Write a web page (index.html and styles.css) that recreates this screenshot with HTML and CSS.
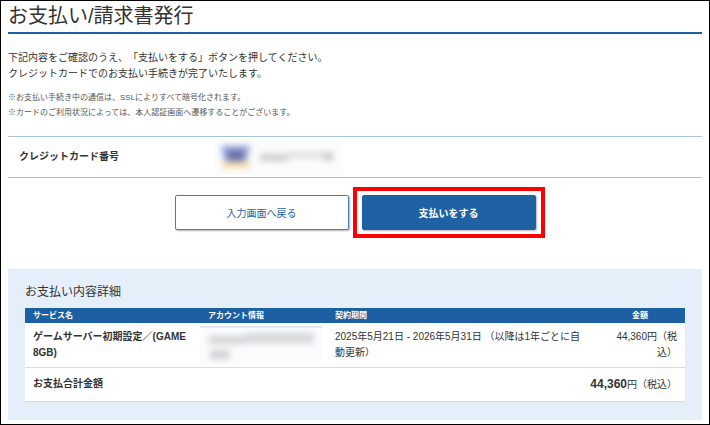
FILE: index.html
```html
<!DOCTYPE html>
<html lang="ja">
<head>
    <meta charset="UTF-8">
    <meta name="viewport" content="width=device-width, initial-scale=1.0">
    <title>お支払い/請求書発行</title>
    <link rel="stylesheet" href="styles.css">
</head>
<body>
    <main class="page">
        <h1>お支払い/請求書発行</h1>

        <p class="lead">下記内容をご確認のうえ、「支払いをする」ボタンを押してください。<br>クレジットカードでのお支払い手続きが完了いたします。</p>
        <ul class="notes">
            <li>※お支払い手続き中の通信は、SSLによりすべて暗号化されます。</li>
            <li>※カードのご利用状況によっては、本人認証画面へ遷移することがございます。</li>
        </ul>

        <dl class="card-info">
            <dt>クレジットカード番号</dt>
            <dd class="masked card-number">
                <svg width="130" height="36" viewBox="0 0 130 36" aria-hidden="true">
                    <g class="blur">
                        <path d="M8 7h29l-4 16H12z" fill="#8f9ad0"/>
                        <path d="M16 12h14v9H16z" fill="#6670a8"/>
                        <rect x="9" y="23" width="28" height="6" fill="#fbdca6"/>
                        <rect x="47" y="15" width="28" height="7" fill="#c9cccc"/>
                        <rect x="75" y="13" width="36" height="6" fill="#dcdede"/>
                        <rect x="111" y="13" width="9" height="9" fill="#c9cccc"/>
                    </g>
                </svg>
            </dd>
        </dl>

        <div class="buttons">
            <button type="button" class="back">入力画面へ戻る</button>
            <div class="highlight">
                <button type="submit" class="pay">支払いをする</button>
            </div>
        </div>

        <section class="details">
            <h2>お支払い内容詳細</h2>
            <table>
                <colgroup>
                    <col class="col-service">
                    <col class="col-account">
                    <col>
                    <col class="col-price">
                </colgroup>
                <thead>
                    <tr>
                        <th>サービス名</th>
                        <th>アカウント情報</th>
                        <th>契約期間</th>
                        <th class="price-head">金額</th>
                    </tr>
                </thead>
                <tbody>
                    <tr>
                        <td class="name">ゲームサーバー初期設定／(GAME 8GB)</td>
                        <td class="account">
                            <div class="masked">
                                <svg width="123" height="36" viewBox="0 0 123 36" aria-hidden="true">
                                    <g class="blur">
                                        <rect x="9" y="8" width="36" height="8" fill="#cfd1d3"/>
                                        <rect x="45" y="5" width="70" height="10" fill="#d4d6d8"/>
                                        <rect x="10" y="22" width="20" height="9" fill="#cfd1d3"/>
                                    </g>
                                </svg>
                            </div>
                        </td>
                        <td>2025年5月21日 - 2026年5月31日 （以降は1年ごとに自動更新）</td>
                        <td class="price">44,360円（税込）</td>
                    </tr>
                </tbody>
                <tfoot>
                    <tr>
                        <td class="name">お支払合計金額</td>
                        <td class="price" colspan="3"><strong>44,360</strong>円（税込）</td>
                    </tr>
                </tfoot>
            </table>
        </section>
    </main>
</body>
</html>
```
FILE: styles.css
```css
* {
  box-sizing: border-box;
}

body {
  margin: 0;
  min-height: 100vh;
  border: 1px solid #000;
  background: #fff;
  color: #333;
  font-family: "Liberation Sans", "Noto Sans CJK JP", sans-serif;
  font-size: 10px;
  line-height: 16px;
  text-spacing-trim: space-all;
}

.page {
  padding: 0 7px 3px;
}

h1 {
  margin: 0 0 16px;
  padding: 3px 0 4px;
  border-bottom: 2px solid #1f62a4;
  font-size: 20px;
  font-weight: normal;
  line-height: 24px;
}

.lead {
  margin: 0 0 8px;
}

.notes {
  margin: 0 0 16px;
  padding: 0;
  list-style: none;
  font-size: 8px;
  line-height: 15px;
  color: #555;
}

.card-info {
  display: flex;
  align-items: center;
  margin: 0 0 17px;
  padding: 2px 0;
  border-top: 1px solid #a9c4dc;
  border-bottom: 1px solid #a9c4dc;
}

.card-info dt {
  width: 205px;
  padding-left: 11px;
  font-weight: bold;
}

.card-info dd {
  margin: 0;
}

.masked {
  background: #fbfcfe;
}

.masked svg {
  display: block;
  overflow: hidden;
}

.blur {
  filter: blur(3px);
}

.buttons {
  display: flex;
  justify-content: center;
  gap: 13px;
  margin-bottom: 39px;
}

.buttons button {
  display: block;
  width: 174px;
  height: 35px;
  padding: 0;
  border: 1px solid #4080b8;
  border-radius: 2px;
  box-shadow: 1px 1px 2px rgba(0, 0, 0, 0.3);
  font-family: inherit;
  font-size: 10px;
  cursor: pointer;
}

.buttons .back {
  background: #fff;
  color: #1f62a4;
}

.buttons .pay {
  border-color: #1f62a4;
  background: #1f62a4;
  color: #fff;
  font-weight: bold;
}

/* red frame round the pay button */
.highlight {
  position: relative;
}

.highlight::after {
  content: "";
  position: absolute;
  inset: -8px -9px;
  border: 4px solid #f00;
  pointer-events: none;
}

.details {
  padding: 14px 17px 18px;
  background: #e5effa;
}

h2 {
  margin: 0 0 7px;
  font-size: 12px;
  font-weight: normal;
  line-height: 18px;
}

table {
  width: 100%;
  border-collapse: collapse;
  table-layout: fixed;
  background: #fff;
}

.col-service {
  width: 175px;
}

.col-account {
  width: 127px;
}

.col-price {
  width: 90px;
}

th {
  padding: 0 8px;
  background: #1c5fa2;
  color: #fff;
  font-size: 8px;
  line-height: 15px;
  text-align: left;
}

td {
  padding: 6px 8px;
  border-bottom: 1px solid #cfdeec;
  vertical-align: top;
}

tfoot td {
  padding: 8px;
}

.name {
  font-weight: bold;
}

.account {
  padding: 3px 5px 3px 0;
}

.account .masked {
  border-top: 2px solid #dfe8f4;
}

.account svg {
  width: 100%;
}

.price-head {
  text-align: center;
}

.price {
  text-align: right;
}

.price strong {
  font-size: 12px;
}
```
